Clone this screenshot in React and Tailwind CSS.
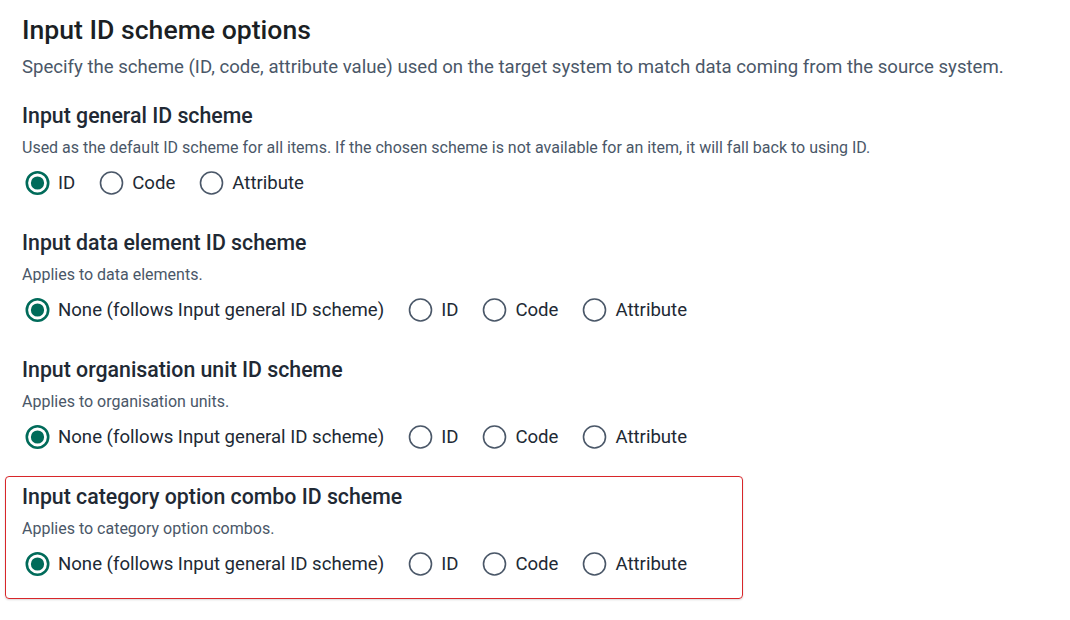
import React from "react";

function Radio({ checked, label }) {
  return (
    <label className="flex items-center gap-[8px]">
      <svg width="25" height="24" viewBox="0 0 25 24" className="shrink-0">
        {checked ? (
          <>
            <circle cx="12.5" cy="12" r="10.7" fill="none" stroke="#006b5a" strokeWidth="2.6" />
            <circle cx="12.5" cy="12" r="6.6" fill="#006b5a" />
          </>
        ) : (
          <circle cx="12.5" cy="12" r="11" fill="none" stroke="#4a5768" strokeWidth="1.6" />
        )}
      </svg>
      <span className="text-[18.6px] leading-[24px] text-[#212934]">{label}</span>
    </label>
  );
}

function Section({ title, sub, options, error }) {
  return (
    <div
      className={
        "w-[738px] rounded-[4px] border px-[16px] pt-[8px] pb-[22px] " +
        (error ? "border-[#d8262a] shadow-[0_1px_2px_rgba(0,0,0,0.15)]" : "border-transparent")
      }
    >
      <div className="text-[21.3px] leading-[24px] font-medium text-[#212934]">{title}</div>
      <div className="mt-[10px] whitespace-nowrap text-[16px] leading-[20px] text-[#4a5768]">{sub}</div>
      <div className="mt-[13px] ml-[3px] flex items-center gap-[24px]">
        {options.map((o, i) => (
          <Radio key={o} label={o} checked={i === 0} />
        ))}
      </div>
    </div>
  );
}

export default function App() {
  const full = ["None (follows Input general ID scheme)", "ID", "Code", "Attribute"];
  return (
    <div
      className="w-[1070px] h-[620px] bg-white pt-[14px] pl-[5px] overflow-hidden"
      style={{ fontFamily: "Roboto, 'Liberation Sans', sans-serif" }}
    >
      <div className="px-[17px]">
        <h1 className="text-[26.6px] leading-[32px] font-medium text-[#1b1f24]">Input ID scheme options</h1>
        <p className="mt-[9px] whitespace-nowrap text-[18.6px] leading-[24px] text-[#4a5768]">
          Specify the scheme (ID, code, attribute value) used on the target system to match data coming from the source system.
        </p>
      </div>
      <div className="mt-[16px] flex flex-col gap-[4px]">
        <Section
          title="Input general ID scheme"
          sub="Used as the default ID scheme for all items. If the chosen scheme is not available for an item, it will fall back to using ID."
          options={["ID", "Code", "Attribute"]}
        />
        <Section title="Input data element ID scheme" sub="Applies to data elements." options={full} />
        <Section title="Input organisation unit ID scheme" sub="Applies to organisation units." options={full} />
        <Section
          title="Input category option combo ID scheme"
          sub="Applies to category option combos."
          options={full}
          error
        />
      </div>
    </div>
  );
}
